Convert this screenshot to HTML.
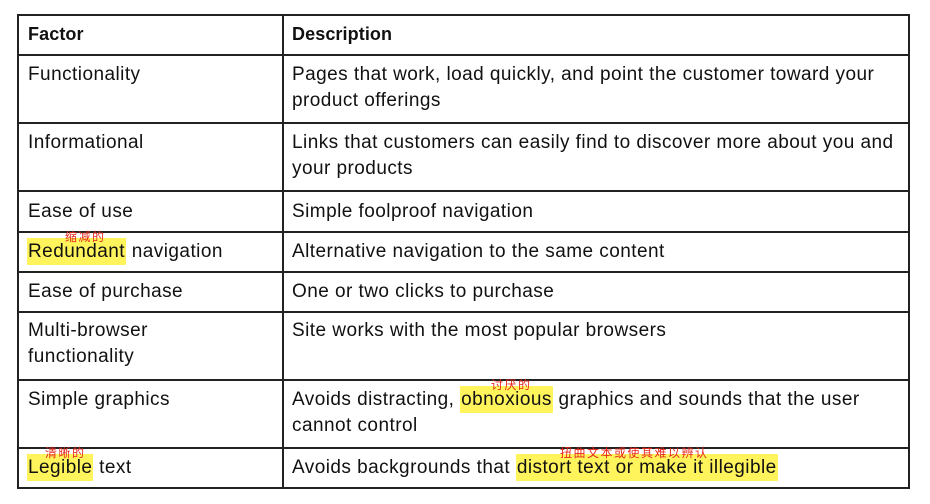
<!DOCTYPE html>
<html><head><meta charset="utf-8"><style>
body{margin:0;width:930px;height:504px;background:#fff;position:relative;overflow:hidden;font-family:"Liberation Sans","Noto Sans CJK SC",sans-serif;font-size:19px;letter-spacing:0.45px;color:#111}
.h{position:absolute;background:#222;height:1.5px}
.v{position:absolute;background:#222;width:1.5px}
.t{position:absolute;white-space:nowrap;line-height:22px}
.b{font-weight:bold;letter-spacing:0.1px;font-size:18px}
.hl{background:#fff45c;padding:3px 1px 3px}
.a{position:absolute;color:#e8261a;font-size:12px;letter-spacing:1.5px;white-space:nowrap;line-height:12px;font-family:"Noto Sans CJK SC",sans-serif}
</style></head><body>
<div class="h" style="left:17px;top:14px;width:893px"></div>
<div class="h" style="left:17px;top:54px;width:893px"></div>
<div class="h" style="left:17px;top:122px;width:893px"></div>
<div class="h" style="left:17px;top:190px;width:893px"></div>
<div class="h" style="left:17px;top:231px;width:893px"></div>
<div class="h" style="left:17px;top:271px;width:893px"></div>
<div class="h" style="left:17px;top:311px;width:893px"></div>
<div class="h" style="left:17px;top:379px;width:893px"></div>
<div class="h" style="left:17px;top:447px;width:893px"></div>
<div class="h" style="left:17px;top:487px;width:893px"></div>
<div class="v" style="left:17px;top:14px;height:475px"></div>
<div class="v" style="left:282px;top:14px;height:475px"></div>
<div class="v" style="left:908px;top:14px;height:475px"></div>

<div class="t b" style="left:28px;top:23px">Factor</div>
<div class="t b" style="left:292px;top:23px">Description</div>

<div class="t" style="left:28px;top:64px">Functionality</div>
<div class="t" style="left:292px;top:64px">Pages that work, load quickly, and point the customer toward your</div>
<div class="t" style="left:292px;top:90px">product offerings</div>

<div class="t" style="left:28px;top:132px">Informational</div>
<div class="t" style="left:292px;top:132px">Links that customers can easily find to discover more about you and</div>
<div class="t" style="left:292px;top:158px">your products</div>

<div class="t" style="left:28px;top:201px">Ease of use</div>
<div class="t" style="left:292px;top:201px">Simple foolproof navigation</div>

<div class="t" style="left:27px;top:241px"><span class="hl">Redundant</span> navigation</div>
<div class="a" style="left:65px;top:231px">缩减的</div>
<div class="t" style="left:292px;top:241px">Alternative navigation to the same content</div>

<div class="t" style="left:28px;top:281px">Ease of purchase</div>
<div class="t" style="left:292px;top:281px">One or two clicks to purchase</div>

<div class="t" style="left:28px;top:320px">Multi-browser</div>
<div class="t" style="left:28px;top:346px">functionality</div>
<div class="t" style="left:292px;top:320px">Site works with the most popular browsers</div>

<div class="t" style="left:28px;top:389px">Simple graphics</div>
<div class="t" style="left:292px;top:389px">Avoids distracting, <span class="hl">obnoxious</span> graphics and sounds that the user</div>
<div class="a" style="left:491px;top:379px">讨厌的</div>
<div class="t" style="left:292px;top:415px">cannot control</div>

<div class="t" style="left:27px;top:457px"><span class="hl">Legible</span> text</div>
<div class="a" style="left:45px;top:447px">清晰的</div>
<div class="t" style="left:292px;top:457px">Avoids backgrounds that <span class="hl">distort text or make it illegible</span></div>
<div class="a" style="left:560px;top:447px">扭曲文本或使其难以辨认</div>
</body></html>
